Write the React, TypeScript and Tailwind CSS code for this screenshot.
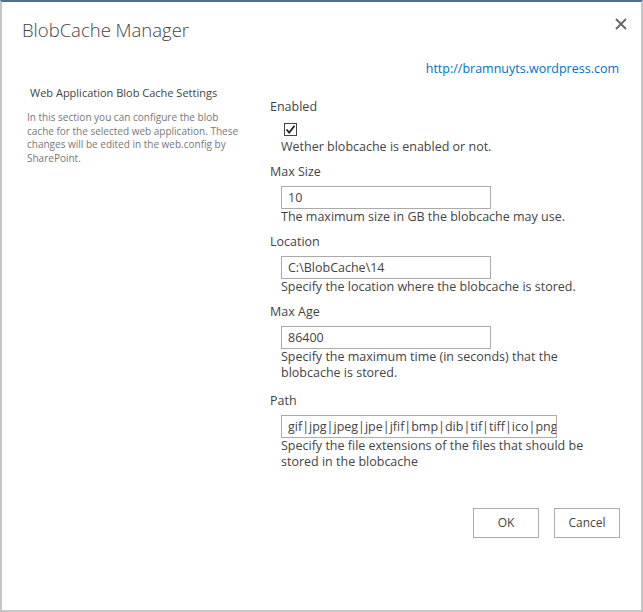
import React from "react";

const font = "font-['Open_Sans','Noto_Sans',sans-serif]";

function Field({
  label,
  children,
  desc,
  gap = "mb-[8px]",
}: {
  label: string;
  children: React.ReactNode;
  desc: React.ReactNode;
  gap?: string;
}) {
  return (
    <div className={gap}>
      <div className="text-[12.5px] leading-[17px] text-[#444]">{label}</div>
      <div className="mt-[6px] pl-[11px]">{children}</div>
      <div className="pl-[11px] text-[12.5px] leading-[16px] text-[#444]">{desc}</div>
    </div>
  );
}

function TextBox({ value, width }: { value: string; width: string }) {
  return (
    <div
      className={`${width} h-[23px] overflow-hidden whitespace-nowrap border border-[#ababab] bg-white pl-[6px] text-[12.5px] leading-[21px] text-[#444]`}
    >
      {value}
    </div>
  );
}

export default function App() {
  return (
    <div
      className={`${font} relative h-[612px] w-[643px] border-x-2 border-b-2 border-t-2 border-[#c6c6c6] border-t-[#4d7194] bg-white`}
    >
      {/* header */}
      <div className="flex items-start justify-between pl-[20px] pr-[14px] pt-[14px]">
        <h1 className="text-[18.5px] font-light leading-[28px] text-[#444]">BlobCache Manager</h1>
        <svg width="12" height="12" viewBox="0 0 12 12" className="mt-[2px]">
          <path d="M1 1 L11 11 M11 1 L1 11" stroke="#666" strokeWidth="1.8" />
        </svg>
      </div>

      <div className="flex justify-end pr-[22px] pt-[16px]">
        <a className="text-[12.5px] leading-[17px] text-[#0072c6]">http://bramnuyts.wordpress.com</a>
      </div>

      {/* body */}
      <div className="flex pt-[8px]">
        <div className="w-[268px] shrink-0 pl-[25px] pr-[16px]">
          <div className="ml-[3px] whitespace-nowrap text-[11px] leading-[16px] text-[#444]">
            Web Application Blob Cache Settings
          </div>
          <p className="mt-[10px] text-[10px] leading-[13.5px] text-[#777]">
            In this section you can configure the blob
            <br />
            cache for the selected web application. These
            <br />
            changes will be edited in the web.config by
            <br />
            SharePoint.
          </p>
        </div>

        <div className="pt-[13px]">
          <div className="mb-[8px]">
            <div className="text-[12.5px] leading-[17px] text-[#444]">Enabled</div>
            <div className="ml-[14px] mt-[8px] flex h-[13px] w-[13px] items-center justify-center border border-[#444] bg-white">
              <svg width="11" height="11" viewBox="0 0 11 11">
                <path d="M1.5 5.5 L4.2 8.5 L9.5 1.8" fill="none" stroke="#222" strokeWidth="1.8" />
              </svg>
            </div>
            <div className="mt-[3px] pl-[11px] text-[12.5px] leading-[16px] text-[#444]">
              Wether blobcache is enabled or not.
            </div>
          </div>
          <Field label="Max Size" desc="The maximum size in GB the blobcache may use.">
            <TextBox value="10" width="w-[210px]" />
          </Field>
          <Field label="Location" desc="Specify the location where the blobcache is stored.">
            <TextBox value="C:\BlobCache\14" width="w-[210px]" />
          </Field>
          <Field
            label="Max Age"
            gap="mb-[11px]"
            desc={
              <>
                Specify the maximum time (in seconds) that the
                <br />
                blobcache is stored.
              </>
            }
          >
            <TextBox value="86400" width="w-[210px]" />
          </Field>
          <Field
            label="Path"
            desc={
              <>
                Specify the file extensions of the files that should be
                <br />
                stored in the blobcache
              </>
            }
          >
            <TextBox
              value="gif|jpg|jpeg|jpe|jfif|bmp|dib|tif|tiff|ico|png|wdp|hdp|css|js"
              width="w-[276px]"
            />
          </Field>
        </div>
      </div>

      {/* footer */}
      <div className="absolute right-[21px] top-[506px] flex gap-[15px]">
        <button className="h-[30px] w-[66px] border border-[#ababab] bg-white text-[12px] text-[#444]">OK</button>
        <button className="h-[30px] w-[66px] border border-[#ababab] bg-white text-[12px] text-[#444]">Cancel</button>
      </div>
    </div>
  );
}
